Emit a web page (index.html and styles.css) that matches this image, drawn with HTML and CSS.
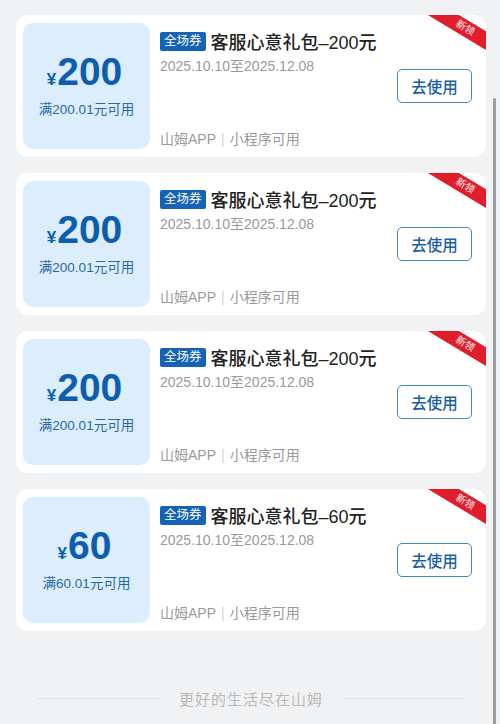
FILE: index.html
```html
<!DOCTYPE html>
<html lang="zh-CN">
<head>
    <meta charset="UTF-8">
    <meta name="viewport" content="width=device-width, initial-scale=1.0">
    <title>我的优惠券</title>
    <link rel="stylesheet" href="styles.css">
</head>
<body>
    <div class="coupon-list">
        <div class="coupon">
            <div class="ribbon">新领</div>
            <div class="coupon-value">
                <div class="amount"><span class="yen">¥</span>200</div>
                <div class="threshold">满200.01元可用</div>
            </div>
            <div class="coupon-info">
                <div class="title-row">
                    <span class="tag">全场券</span>
                    <span class="title">客服心意礼包–200元</span>
                </div>
                <div class="period">2025.10.10至2025.12.08</div>
                <div class="channel">山姆APP<span class="sep">|</span>小程序可用</div>
            </div>
            <div class="coupon-action">
                <button class="use-btn">去使用</button>
            </div>
        </div>
        <div class="coupon">
            <div class="ribbon">新领</div>
            <div class="coupon-value">
                <div class="amount"><span class="yen">¥</span>200</div>
                <div class="threshold">满200.01元可用</div>
            </div>
            <div class="coupon-info">
                <div class="title-row">
                    <span class="tag">全场券</span>
                    <span class="title">客服心意礼包–200元</span>
                </div>
                <div class="period">2025.10.10至2025.12.08</div>
                <div class="channel">山姆APP<span class="sep">|</span>小程序可用</div>
            </div>
            <div class="coupon-action">
                <button class="use-btn">去使用</button>
            </div>
        </div>
        <div class="coupon">
            <div class="ribbon">新领</div>
            <div class="coupon-value">
                <div class="amount"><span class="yen">¥</span>200</div>
                <div class="threshold">满200.01元可用</div>
            </div>
            <div class="coupon-info">
                <div class="title-row">
                    <span class="tag">全场券</span>
                    <span class="title">客服心意礼包–200元</span>
                </div>
                <div class="period">2025.10.10至2025.12.08</div>
                <div class="channel">山姆APP<span class="sep">|</span>小程序可用</div>
            </div>
            <div class="coupon-action">
                <button class="use-btn">去使用</button>
            </div>
        </div>
        <div class="coupon">
            <div class="ribbon">新领</div>
            <div class="coupon-value">
                <div class="amount"><span class="yen">¥</span>60</div>
                <div class="threshold">满60.01元可用</div>
            </div>
            <div class="coupon-info">
                <div class="title-row">
                    <span class="tag">全场券</span>
                    <span class="title">客服心意礼包–60元</span>
                </div>
                <div class="period">2025.10.10至2025.12.08</div>
                <div class="channel">山姆APP<span class="sep">|</span>小程序可用</div>
            </div>
            <div class="coupon-action">
                <button class="use-btn">去使用</button>
            </div>
        </div>
    </div>
    <div class="footer">
        <span class="line"></span>
        <span class="slogan">更好的生活尽在山姆</span>
        <span class="line"></span>
    </div>
    <div class="scrollbar"></div>
</body>
</html>
```

FILE: styles.css
```css
body {
    margin: 0;
    padding: 0;
    background-color: #f1f2f4;
    font-family: "Liberation Sans", "Noto Sans CJK SC", sans-serif;
    color: #222;
    height: 724px;
    overflow: hidden;
}
.coupon-list {
    display: flex;
    flex-direction: column;
    gap: 16px;
    padding: 15px 14px 0 16px;
}
.coupon {
    position: relative;
    display: flex;
    height: 142px;
    box-sizing: border-box;
    padding: 8px 14px 8px 7px;
    background: #fff;
    border-radius: 12px;
    overflow: hidden;
}
.ribbon {
    position: absolute;
    top: 5px;
    right: -29px;
    width: 100px;
    height: 16px;
    line-height: 16px;
    background: #e01d2b;
    color: #fff;
    font-size: 10px;
    text-align: center;
    transform: rotate(31deg);
}
.coupon-value {
    width: 127px;
    height: 126px;
    box-sizing: border-box;
    padding-top: 26px;
    flex-shrink: 0;
    background: #dcedfd;
    border-radius: 10px;
    display: flex;
    flex-direction: column;
    align-items: center;
    color: #0d5eae;
}
.amount {
    font-size: 39px;
    font-weight: 700;
    line-height: 42px;
    margin-top: 2px;
    margin-left: -4px;
}
.yen {
    font-size: 17px;
    margin-right: 1px;
}
.threshold {
    font-size: 13.5px;
    line-height: 18px;
    color: #2a68a6;
}
.coupon-info {
    flex: 1;
    display: flex;
    flex-direction: column;
    padding-left: 10px;
    min-width: 0;
}
.title-row {
    display: flex;
    align-items: center;
    margin-top: 8px;
    height: 20px;
}
.tag {
    background: #1463b6;
    color: #fff;
    font-size: 12.5px;
    line-height: 19px;
    padding: 0 4px;
    border-radius: 2px;
}
.title {
    margin-left: 5px;
    font-size: 18px;
    font-weight: 500;
    color: #222;
    white-space: nowrap;
}
.period {
    margin-top: 5px;
    font-size: 14px;
    line-height: 20px;
    color: #9a9a9a;
}
.channel {
    margin-top: auto;
    font-size: 14px;
    line-height: 20px;
    color: #9a9a9a;
}
.sep {
    color: #d2d2d2;
    margin: 0 5px;
}
.coupon-action {
    display: flex;
    align-items: center;
}
.use-btn {
    width: 75px;
    height: 34px;
    background: #fff;
    border: 1.5px solid #4189c0;
    border-radius: 5px;
    color: #1a5ea6;
    font-family: "Noto Sans CJK SC", sans-serif;
    font-size: 15.5px;
    font-weight: 500;
    padding: 0;
}
.footer {
    display: flex;
    align-items: center;
    justify-content: center;
    margin-top: 57px;
    padding: 0 35px 0 37px;
    gap: 20px;
}
.line {
    flex: 1;
    height: 1px;
    background: #e2e3e5;
}
.slogan {
    font-size: 15px;
    color: #b9b9b9;
    letter-spacing: 1px;
}
.scrollbar {
    position: fixed;
    top: 98px;
    right: 4px;
    width: 3px;
    height: 640px;
    background: #9d9d9d;
    border-radius: 2px;
}
```
